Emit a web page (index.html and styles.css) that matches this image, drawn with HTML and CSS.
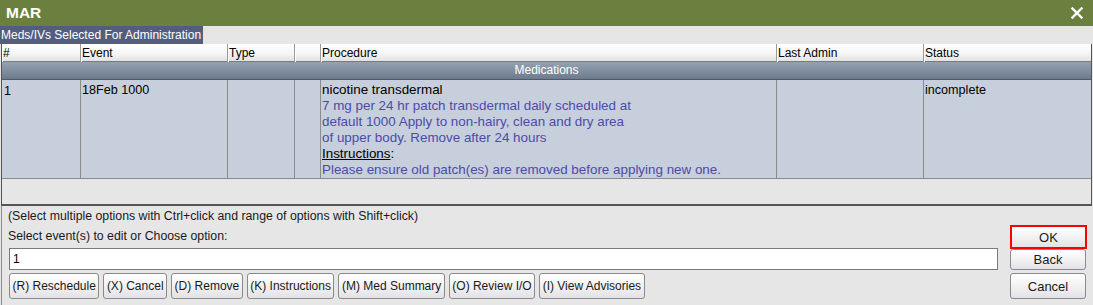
FILE: index.html
```html
<!DOCTYPE html>
<html>
<head>
<meta charset="utf-8">
<link rel="stylesheet" href="styles.css">
</head>
<body>
<div class="window">
  <div class="titlebar">
    <span class="title">MAR</span>
    <svg class="close" width="12" height="12" viewBox="0 0 12 12"><path d="M1.5 1.5 L10.5 10.5 M10.5 1.5 L1.5 10.5" stroke="#fff" stroke-width="2.4" stroke-linecap="square"/></svg>
  </div>
  <div class="section"><span class="section-label">Meds/IVs Selected For Administration</span></div>
  <div class="table">
    <div class="row header">
      <div class="cell">#</div>
      <div class="cell">Event</div>
      <div class="cell">Type</div>
      <div class="cell"></div>
      <div class="cell">Procedure</div>
      <div class="cell">Last Admin</div>
      <div class="cell">Status</div>
    </div>
    <div class="group">Medications</div>
    <div class="row data">
      <div class="cell">1</div>
      <div class="cell">18Feb 1000</div>
      <div class="cell"></div>
      <div class="cell"></div>
      <div class="cell proc">
        <div>nicotine transdermal</div>
        <div class="desc">7 mg per 24 hr patch transdermal daily scheduled at</div>
        <div class="desc">default 1000 Apply to non-hairy, clean and dry area</div>
        <div class="desc">of upper body. Remove after 24 hours</div>
        <div><u>Instructions</u>:</div>
        <div class="desc">Please ensure old patch(es) are removed before applying new one.</div>
      </div>
      <div class="cell"></div>
      <div class="cell">incomplete</div>
    </div>
    <div class="filler"></div>
  </div>
  <div class="bottom">
    <div class="left">
      <div class="hint">(Select multiple options with Ctrl+click and range of options with Shift+click)</div>
      <div class="hint">Select event(s) to edit or Choose option:</div>
      <div class="input">1</div>
      <div class="buttons">
        <button class="btn">(R) Reschedule</button>
        <button class="btn">(X) Cancel</button>
        <button class="btn">(D) Remove</button>
        <button class="btn">(K) Instructions</button>
        <button class="btn">(M) Med Summary</button>
        <button class="btn">(O) Review I/O</button>
        <button class="btn">(I) View Advisories</button>
      </div>
    </div>
    <div class="right">
      <button class="btn side ok">OK</button>
      <button class="btn side back">Back</button>
      <button class="btn side cancel">Cancel</button>
    </div>
  </div>
</div>
</body>
</html>
```

FILE: styles.css
```css
html, body {
  margin: 0;
  padding: 0;
  background: #e6e6e6;
}
body {
  font-family: "Liberation Sans", Arial, sans-serif;
  font-size: 12px;
  color: #000;
}
.window {
  width: 1093px;
  height: 305px;
  overflow: hidden;
  background: #e6e6e6;
}
.titlebar {
  height: 26px;
  background: #6b7f3f;
  display: flex;
  align-items: center;
  justify-content: space-between;
  padding: 0 10px 0 6px;
}
.title {
  color: #fff;
  font-weight: bold;
  font-size: 15.5px;
}
.close {
  display: block;
}
.section {
  height: 18px;
  display: flex;
  align-items: stretch;
}
.section-label {
  background: #535e7d;
  color: #fff;
  padding: 0 2px 0 1px;
  line-height: 18px;
}
.table {
  margin: 0 1px 0 1px;
  border-left: 1px solid #555;
  border-right: 1px solid #555;
  border-bottom: 2px solid #555;
  background: #e6e6e6;
  height: 160px;
  display: flex;
  flex-direction: column;
}
.row {
  display: grid;
  grid-template-columns: 79px 147px 67px 26px 456px 147px 1fr;
}
.header {
  height: 18px;
  background: linear-gradient(#ffffff, #f4f4f4 60%, #e2e2e2);
  border-bottom: 1px solid #7a7a7a;
  box-sizing: border-box;
}
.header .cell {
  line-height: 18px;
  padding-left: 1px;
  border-right: 1px solid #9a9a9a;
  box-shadow: inset 1px 0 0 #fff;
}
.header .cell:last-child {
  border-right: none;
}
.group {
  height: 18px;
  line-height: 17px;
  text-align: center;
  color: #fff;
  background: linear-gradient(#94a1b0, #7d8b9c 60%, #6c7a8c);
  border-bottom: 1px solid #4f5a68;
  box-sizing: border-box;
}
.data {
  background: #c7cedc;
  border-bottom: 1px solid #8c8c8c;
  font-size: 12.6px;
}
.data .cell {
  border-right: 1px solid #8c8c8c;
  padding: 2px 0 0 1px;
  line-height: 16px;
}
.data .cell:first-child {
  padding-left: 2px;
  padding-top: 3px;
}
.data .cell:last-child {
  border-right: none;
}
.data .proc {
  font-size: 13.4px;
}
.desc {
  color: #4c4ca8;
}
.filler {
  flex: 1;
}
.bottom {
  display: flex;
  border-left: 1px solid #8a8a8a;
  margin-left: 1px;
  height: 99px;
}
.left {
  flex: 1;
  padding-left: 6px;
}
.hint {
  line-height: 20px;
  color: #1a1a1a;
  font-size: 12.3px;
}
.input {
  margin-top: 2px;
  margin-left: 1px;
  width: 989px;
  height: 22px;
  box-sizing: border-box;
  background: #fff;
  border: 1px solid #7a7a7a;
  padding-left: 3px;
  line-height: 20px;
}
.buttons {
  margin-top: 3px;
  margin-left: 1px;
  display: flex;
  gap: 4px;
}
.btn {
  font-family: "Liberation Sans", Arial, sans-serif;
  font-size: 12px;
  color: #1a1a1a;
  height: 26px;
  padding: 0 2.5px;
  border: 1px solid #8a8a8a;
  border-radius: 3px;
  background: linear-gradient(#ffffff, #f2f2f2 50%, #e2e2e8);
  margin: 0;
}
.right {
  width: 77px;
  margin-right: 6px;
  padding-top: 19px;
  display: flex;
  flex-direction: column;
  align-items: flex-end;
}
.side {
  width: 76px;
  font-size: 13px;
}
.ok {
  width: 77px;
  height: 24px;
  border: 2px solid #ff0000;
  border-radius: 0;
}
.back {
  height: 21px;
  margin-right: 1px;
}
.cancel {
  height: 26px;
  margin-top: 3px;
  margin-right: 1px;
}
```
